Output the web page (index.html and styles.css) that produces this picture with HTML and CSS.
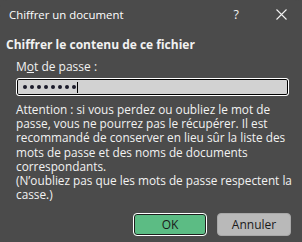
FILE: index.html
```html
<!DOCTYPE html>
<html lang="fr">
<head>
<meta charset="utf-8">
<link rel="stylesheet" href="styles.css">
</head>
<body>
<div class="dialog">
  <div class="titlebar">
    <span class="title">Chiffrer un document</span>
    <span class="help">?</span>
    <span class="close"><svg width="11" height="11" viewBox="0 0 11 11"><path d="M0.5 0.5L10.5 10.5M10.5 0.5L0.5 10.5" stroke="#f2f2f2" stroke-width="1.1" fill="none"/></svg></span>
  </div>
  <div class="content">
    <div class="heading">Chiffrer le contenu de ce fichier</div>
    <div class="group">
      <label class="label">M<u>o</u>t de passe :</label>
      <div class="input">
        <span class="dots"><i></i><i></i><i></i><i></i><i></i><i></i><i></i><i></i></span>
        <span class="caret"></span>
      </div>
      <p class="note">Attention : si vous perdez ou oubliez le mot de<br>passe, vous ne pourrez pas le récupérer. Il est<br>recommandé de conserver en lieu sûr la liste des<br>mots de passe et des noms de documents<br>correspondants.<br>(N’oubliez pas que les mots de passe respectent la<br>casse.)</p>
    </div>
    <div class="buttons">
      <button class="btn ok">OK</button>
      <button class="btn cancel">Annuler</button>
    </div>
  </div>
</div>
</body>
</html>
```
FILE: styles.css
```css
html, body {
  margin: 0;
  padding: 0;
  background: #4b4b4b;
}
.dialog {
  width: 302px;
  height: 242px;
  background: #4b4b4b;
  color: #f2f2f2;
  font-family: "Open Sans", "Noto Sans", sans-serif;
  font-size: 12px;
  box-sizing: border-box;
  border-radius: 7px;
  overflow: hidden;
  display: flex;
  flex-direction: column;
}
.titlebar {
  height: 28px;
  display: flex;
  align-items: center;
  padding-left: 9px;
}
.title {
  flex: 1;
  font-size: 11.4px;
  color: #ffffff;
}
.help {
  margin-right: 37px;
  font-size: 12.5px;
}
.close {
  display: flex;
  margin-right: 15px;
}
.content {
  padding: 9px 6px 0 6px;
  display: flex;
  flex-direction: column;
}
.heading {
  font-weight: bold;
  font-size: 12px;
  line-height: 16px;
}
.group {
  padding-left: 10px;
  padding-top: 7px;
}
.label {
  display: block;
  line-height: 14px;
}
.input {
  margin-top: 4px;
  width: 273px;
  height: 18px;
  box-sizing: border-box;
  background: #d2d2d2;
  border: 1px solid #ffffff;
  box-shadow: inset 0 0 0 1px #000;
  border-radius: 3px;
  display: flex;
  align-items: center;
  padding-left: 6px;
}
.dots {
  display: flex;
  gap: 3px;
}
.dots i {
  width: 4px;
  height: 4px;
  border-radius: 50%;
  background: #1b1b2a;
}
.caret {
  width: 1px;
  height: 11px;
  background: #000;
  margin-left: 1px;
}
.note {
  margin: 6px 0 0 0;
  line-height: 14.2px;
  font-size: 11.8px;
  white-space: nowrap;
}
.buttons {
  display: flex;
  justify-content: flex-end;
  gap: 10px;
  padding-right: 5px;
  margin-top: 12px;
}
.btn {
  width: 74px;
  height: 23px;
  box-sizing: border-box;
  font-family: inherit;
  font-size: 12px;
  color: #1a1a1a;
  border-radius: 4px;
  padding: 0;
}
.ok {
  background: #5cbc84;
  border: 1px solid #ffffff;
  box-shadow: inset 0 0 0 1px #1e1e1e;
}
.cancel {
  background: #b9b9b9;
  border: 1px solid #a8a8a8;
}
```
